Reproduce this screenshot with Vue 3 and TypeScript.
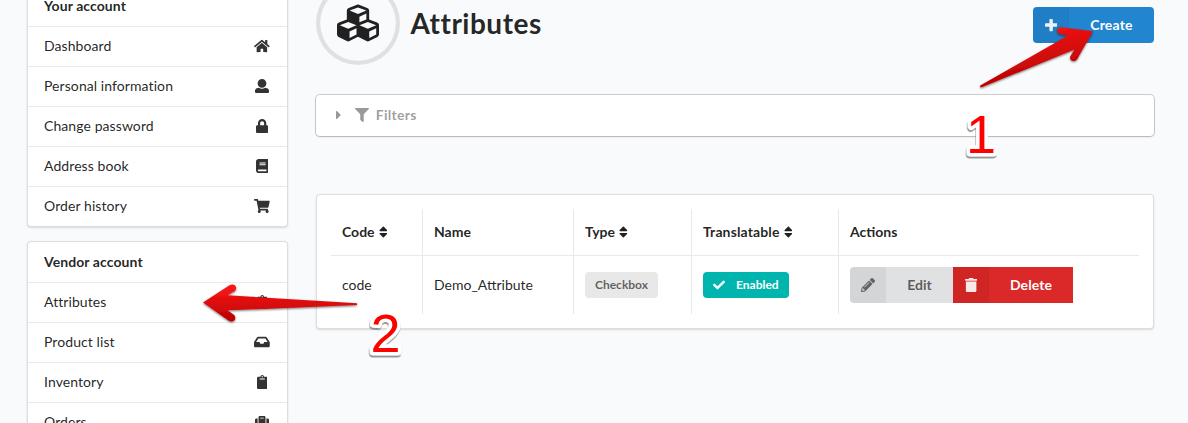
<script setup lang="ts">
interface Glyph { w: number; d: string }
interface MenuItem { label: string; icon: string }
interface Column { key: string; label: string; sortable: boolean }

const glyphs: Record<string, Glyph> = {
  home: { w: 576, d: 'M280.37 148.26L96 300.11V464a16 16 0 0 0 16 16l112.06-.29a16 16 0 0 0 15.92-16V368a16 16 0 0 1 16-16h64a16 16 0 0 1 16 16v95.64a16 16 0 0 0 16 16.05L464 480a16 16 0 0 0 16-16V300L295.67 148.26a12.19 12.19 0 0 0-15.3 0zM571.6 251.47L488 182.56V44.05a12 12 0 0 0-12-12h-56a12 12 0 0 0-12 12v72.61L318.47 43a48 48 0 0 0-61 0L4.34 251.47a12 12 0 0 0-1.6 16.9l25.5 31A12 12 0 0 0 45.15 301l235.22-193.74a12.19 12.19 0 0 1 15.3 0L530.9 301a12 12 0 0 0 16.9-1.6l25.5-31a12 12 0 0 0-1.7-16.93z' },
  user: { w: 512, d: 'M256 0c88.366 0 160 71.634 160 160s-71.634 160-160 160S96 248.366 96 160 167.634 0 256 0zm183.283 333.821l-71.313-17.828c-74.923 53.89-165.738 41.864-223.94 0l-71.313 17.828C29.981 344.505 0 382.903 0 426.955V464c0 26.51 21.49 48 48 48h416c26.51 0 48-21.49 48-48v-37.045c0-44.052-29.981-82.45-72.717-93.134z' },
  lock: { w: 448, d: 'M400 224h-24v-72C376 68.2 307.8 0 224 0S72 68.2 72 152v72H48c-26.5 0-48 21.5-48 48v192c0 26.5 21.5 48 48 48h352c26.5 0 48-21.5 48-48V272c0-26.5-21.5-48-48-48zm-104 0H152v-72c0-39.7 32.3-72 72-72s72 32.3 72 72v72z' },
  book: { w: 448, d: 'M448 360V24c0-13.3-10.7-24-24-24H96C43 0 0 43 0 96v320c0 53 43 96 96 96h328c13.3 0 24-10.7 24-24v-16c0-7.5-3.5-14.3-8.9-18.7-4.2-15.4-4.2-59.3 0-74.7 5.4-4.3 8.9-11.1 8.9-18.6zM128 134c0-3.3 2.7-6 6-6h212c3.3 0 6 2.7 6 6v20c0 3.3-2.7 6-6 6H134c-3.3 0-6-2.7-6-6v-20zm0 64c0-3.3 2.7-6 6-6h212c3.3 0 6 2.7 6 6v20c0 3.3-2.7 6-6 6H134c-3.3 0-6-2.7-6-6v-20zm253.4 250H96c-17.7 0-32-14.3-32-32 0-17.6 14.4-32 32-32h285.4c-1.9 17.1-1.9 46.9 0 64z' },
  cart: { w: 576, d: 'M528.12 301.319l47.273-208C578.806 78.301 567.391 64 551.99 64H159.208l-9.166-44.81C147.758 8.021 137.93 0 126.529 0H24C10.745 0 0 10.745 0 24v16c0 13.255 10.745 24 24 24h69.883l70.248 343.435C147.325 417.1 136 435.222 136 456c0 30.928 25.072 56 56 56s56-25.072 56-56c0-15.674-6.447-29.835-16.824-40h209.647C430.447 426.165 424 440.326 424 456c0 30.928 25.072 56 56 56s56-25.072 56-56c0-22.172-12.888-41.332-31.579-50.405l5.517-24.276c3.413-15.018-8.002-29.319-23.403-29.319H218.117l-6.545-32h293.145c11.206 0 20.92-7.754 23.403-18.681z' },
  clipboard: { w: 384, d: 'M384 112v352c0 26.51-21.49 48-48 48H48c-26.51 0-48-21.49-48-48V112c0-26.51 21.49-48 48-48h80c0-35.29 28.71-64 64-64s64 28.71 64 64h80c26.51 0 48 21.49 48 48zM192 40c-13.255 0-24 10.745-24 24s10.745 24 24 24 24-10.745 24-24-10.745-24-24-24m96 114v-20a6 6 0 0 0-6-6H102a6 6 0 0 0-6 6v20a6 6 0 0 0 6 6h180a6 6 0 0 0 6-6z' },
  inbox: { w: 576, d: 'M567.938 243.908L462.25 85.374A48.003 48.003 0 0 0 422.311 64H153.689a48 48 0 0 0-39.938 21.374L8.062 243.908A47.994 47.994 0 0 0 0 270.533V400c0 26.51 21.49 48 48 48h480c26.51 0 48-21.49 48-48V270.533a47.994 47.994 0 0 0-8.062-26.625zM162.252 128h251.497l85.333 128H376l-32 64H232l-32-64H76.918l85.334-128z' },
  suitcase: { w: 512, d: 'M128 480h256V80c0-26.5-21.5-48-48-48H176c-26.5 0-48 21.5-48 48v400zm64-384h128v32H192V96zm320 80v256c0 26.5-21.5 48-48 48h-48V128h48c26.5 0 48 21.5 48 48zM96 480H48c-26.5 0-48-21.5-48-48V176c0-26.5 21.5-48 48-48h48v352z' },
  cubes: { w: 512, d: 'M488.6 250.2L392 214V105.5c0-15-9.3-28.4-23.4-33.7l-100-37.5c-8.1-3.1-17.1-3.1-25.3 0l-100 37.5c-14.1 5.3-23.4 18.7-23.4 33.7V214l-96.6 36.2C9.3 255.5 0 268.9 0 283.9V394c0 13.6 7.7 26.1 19.9 32.2l100 50c10.1 5.1 22.1 5.1 32.2 0l103.9-52 103.9 52c10.1 5.1 22.1 5.1 32.2 0l100-50c12.2-6.1 19.9-18.6 19.9-32.2V283.9c0-15-9.3-28.4-23.4-33.7zM358 214.8l-85 31.9v-68.2l85-37v73.3zM154 104.1l102-38.2 102 38.2v.6l-102 41.4-102-41.4v-.6zm84 291.1l-85 42.5v-79.1l85-38.8v75.4zm0-112l-102 41.4-102-41.4v-.6l102-38.2 102 38.2v.6zm240 112l-85 42.5v-79.1l85-38.8v75.4zm0-112l-102 41.4-102-41.4v-.6l102-38.2 102 38.2v.6z' },
  filter: { w: 512, d: 'M487.976 0H24.028C2.71 0-8.047 25.866 7.058 40.971L192 225.941V432c0 7.831 3.821 15.17 10.237 19.662l80 55.98C298.02 518.69 320 507.493 320 487.98V225.941l184.947-184.97C520.021 25.896 509.338 0 487.976 0z' },
  caret: { w: 192, d: 'M0 384.662V127.338c0-17.818 21.543-26.741 34.142-14.142l128.662 128.662c7.81 7.81 7.81 20.474 0 28.284L34.142 398.804C21.543 411.404 0 402.48 0 384.662z' },
  plus: { w: 448, d: 'M448 294.2v-76.4c0-13.3-10.7-24-24-24H286.2V56c0-13.3-10.7-24-24-24h-76.4c-13.3 0-24 10.7-24 24v137.8H24c-13.3 0-24 10.7-24 24v76.4c0 13.3 10.7 24 24 24h137.8V456c0 13.3 10.7 24 24 24h76.4c13.3 0 24-10.7 24-24V318.2H424c13.3 0 24-10.7 24-24z' },
  check: { w: 512, d: 'M173.898 439.404l-166.4-166.4c-9.997-9.997-9.997-26.206 0-36.204l36.203-36.204c9.997-9.998 26.207-9.998 36.204 0L192 312.69 432.095 72.596c9.997-9.997 26.207-9.997 36.204 0l36.203 36.204c9.997 9.997 9.997 26.206 0 36.204l-294.4 294.401c-9.998 9.997-26.207 9.997-36.204-.001z' },
  pencil: { w: 512, d: 'M497.9 142.1l-46.1 46.1c-4.7 4.7-12.3 4.7-17 0l-111-111c-4.7-4.7-4.7-12.3 0-17l46.1-46.1c18.7-18.7 49.1-18.7 67.9 0l60.1 60.1c18.8 18.7 18.8 49.1 0 67.9zM284.2 99.8L21.6 362.4.4 483.9c-2.9 16.4 11.4 30.6 27.8 27.8l121.5-21.3 262.6-262.6c4.7-4.7 4.7-12.3 0-17l-111-111c-4.8-4.7-12.4-4.7-17.1 0zM124.1 339.9c-5.5-5.5-5.5-14.3 0-19.8l154-154c5.5-5.5 14.3-5.5 19.8 0s5.5 14.3 0 19.8l-154 154c-5.5 5.5-14.3 5.5-19.8 0zM88 424h48v36.3l-64.5 11.3-31.1-31.1L51.7 376H88v48z' },
  trash: { w: 448, d: 'M0 84V56c0-13.3 10.7-24 24-24h112l9.4-18.7c4-8.2 12.3-13.3 21.4-13.3h114.3c9.1 0 17.4 5.1 21.5 13.3L312 32h112c13.3 0 24 10.7 24 24v28c0 6.6-5.4 12-12 12H12C5.4 96 0 90.6 0 84zm416 56v324c0 26.5-21.5 48-48 48H80c-26.5 0-48-21.5-48-48V140c0-6.6 5.4-12 12-12h360c6.6 0 12 5.4 12 12z' },
  sort: { w: 320, d: 'M41 288h238c21.4 0 32.1 25.9 17 41L177 448c-9.4 9.4-24.6 9.4-33.9 0L24 329c-15.1-15.1-4.4-41 17-41zm255-105L177 64c-9.4-9.4-24.6-9.4-33.9 0L24 183c-15.1 15.1-4.4 41 17 41h238c21.4 0 32.1-25.9 17-41z' },
}

const box = (name: string): string => `0 0 ${glyphs[name].w} 512`

const menus: { title: string; items: MenuItem[] }[] = [
  {
    title: 'Your account',
    items: [
      { label: 'Dashboard', icon: 'home' },
      { label: 'Personal information', icon: 'user' },
      { label: 'Change password', icon: 'lock' },
      { label: 'Address book', icon: 'book' },
      { label: 'Order history', icon: 'cart' },
    ],
  },
  {
    title: 'Vendor account',
    items: [
      { label: 'Attributes', icon: 'clipboard' },
      { label: 'Product list', icon: 'inbox' },
      { label: 'Inventory', icon: 'clipboard' },
      { label: 'Orders', icon: 'suitcase' },
    ],
  },
]

const columns: Column[] = [
  { key: 'code', label: 'Code', sortable: true },
  { key: 'name', label: 'Name', sortable: false },
  { key: 'type', label: 'Type', sortable: true },
  { key: 'translatable', label: 'Translatable', sortable: true },
  { key: 'actions', label: 'Actions', sortable: false },
]
</script>

<template>
  <div class="page">
    <aside class="sidebar">
      <nav v-for="menu in menus" :key="menu.title" class="menu">
        <div class="item title">{{ menu.title }}</div>
        <a v-for="item in menu.items" :key="item.label" class="item">
          <span>{{ item.label }}</span>
          <span class="slot"><svg class="icon" :viewBox="box(item.icon)"><path :d="glyphs[item.icon].d" /></svg></span>
        </a>
      </nav>
    </aside>

    <main class="main">
      <header class="heading">
        <div class="circle"><svg class="icon" :viewBox="box('cubes')"><path :d="glyphs.cubes.d" /></svg></div>
        <h1>Attributes</h1>
        <button class="button primary">
          <span class="lead"><svg class="icon" :viewBox="box('plus')"><path :d="glyphs.plus.d" /></svg></span>
          <span class="text">Create</span>
        </button>
      </header>

      <section class="filters">
        <svg class="icon caret" :viewBox="box('caret')"><path :d="glyphs.caret.d" /></svg>
        <svg class="icon funnel" :viewBox="box('filter')"><path :d="glyphs.filter.d" /></svg>
        <span>Filters</span>
      </section>

      <section class="segment">
        <div class="grid">
          <div v-for="col in columns" :key="col.key" class="cell head">
            <span>{{ col.label }}</span>
            <svg v-if="col.sortable" class="icon sort" :viewBox="box('sort')"><path :d="glyphs.sort.d" /></svg>
          </div>
          <div class="cell">code</div>
          <div class="cell">Demo_Attribute</div>
          <div class="cell"><span class="label">Checkbox</span></div>
          <div class="cell">
            <span class="label teal">
              <svg class="icon" :viewBox="box('check')"><path :d="glyphs.check.d" /></svg>Enabled
            </span>
          </div>
          <div class="cell">
            <button class="button edit">
              <span class="lead"><svg class="icon" :viewBox="box('pencil')"><path :d="glyphs.pencil.d" /></svg></span>
              <span class="text">Edit</span>
            </button>
            <button class="button delete">
              <span class="lead"><svg class="icon" :viewBox="box('trash')"><path :d="glyphs.trash.d" /></svg></span>
              <span class="text">Delete</span>
            </button>
          </div>
        </div>
      </section>
    </main>

    <svg class="notes" viewBox="0 0 1188 423">
      <defs>
        <linearGradient id="redDown" x1="0" y1="0" x2="0" y2="1">
          <stop offset="0" stop-color="#ff1a1a" />
          <stop offset="1" stop-color="#b80000" />
        </linearGradient>
        <linearGradient id="redDiagonal" x1="0.55" y1="0" x2="0.85" y2="0.8">
          <stop offset="0" stop-color="#f81414" />
          <stop offset="1" stop-color="#b00000" />
        </linearGradient>
        <filter id="soft" x="-10%" y="-20%" width="120%" height="150%">
          <feDropShadow dx="0" dy="1" stdDeviation="1" flood-color="#000" flood-opacity="0.55" />
        </filter>
        <filter id="edge" x="-30%" y="-20%" width="160%" height="150%">
          <feDropShadow dx="-0.5" dy="1.8" stdDeviation="0.3" flood-color="#8c8c8c" flood-opacity="1" />
        </filter>
      </defs>
      <path class="arrow" fill="url(#redDown)" d="M203 302.5L229.500 285.200C234.500 282.500 238.500 287.500 234.500 291.200L227.500 295.300L357 303.200V305L227.500 310.300L233.500 314.500C238 318.500 233 324 228.500 320.500Z" />
      <path class="arrow" fill="url(#redDiagonal)" d="M1093 31.300L1061 27.200C1056 27 1056 33.700 1060.500 34.300L1068 35.500L980.300 85.500Q979.500 87.500 981.500 87.300L1074.500 49.500L1070.500 56C1068.500 60.500 1074.500 63 1077 59.300Z" />
      <g class="digits">
        <text x="966" y="153">1</text>
        <text x="370.500" y="352">2</text>
      </g>
    </svg>
  </div>
</template>

<style>
body {
  margin: 0;
  background: #f9fafc;
}
</style>

<style scoped>
.page {
  position: relative;
  display: flex;
  gap: 28px;
  box-sizing: border-box;
  width: 1188px;
  height: 423px;
  padding: 0 34px 0 27px;
  overflow: hidden;
  font: 14px/20px Lato, "Liberation Sans", sans-serif;
  color: rgba(0, 0, 0, 0.87);
}
.icon {
  display: block;
  height: 1em;
  width: auto;
  fill: currentColor;
}
.sidebar {
  flex: none;
  width: 261px;
  margin-top: -15px;
}
.menu {
  box-sizing: border-box;
  margin-bottom: 14px;
  background: #fff;
  border: 1px solid rgba(34, 36, 38, 0.15);
  border-radius: 4px;
  box-shadow: 0 1px 2px rgba(34, 36, 38, 0.15);
}
.item {
  display: flex;
  align-items: center;
  justify-content: space-between;
  box-sizing: border-box;
  height: 40px;
  padding: 0 16.500px 2px 16px;
  border-top: 1px solid rgba(34, 36, 38, 0.1);
  letter-spacing: 0.08px;
}
.title {
  border-top-color: transparent;
  font-weight: 700;
}
.slot {
  display: flex;
  justify-content: center;
  width: 17px;
  color: rgba(0, 0, 0, 0.8);
}
.main {
  flex: 1;
  min-width: 0;
}
.heading {
  display: flex;
  align-items: center;
  height: 84px;
  margin-top: -19px;
}
.circle {
  display: flex;
  align-items: center;
  justify-content: center;
  width: 84px;
  height: 84px;
  border-radius: 50%;
  box-shadow: 0 0 0 4.2px rgba(0, 0, 0, 0.1) inset;
  font-size: 42px;
}
h1 {
  flex: 1;
  margin: 0 0 0 10.500px;
  font-size: 28px;
  line-height: 36px;
  font-weight: 700;
  letter-spacing: 0.5px;
}
.button {
  display: flex;
  height: 36px;
  padding: 0;
  border: 0;
  overflow: hidden;
  font: 700 14px/36px Lato, "Liberation Sans", sans-serif;
  color: #fff;
}
.lead {
  display: flex;
  align-items: center;
  justify-content: center;
  width: 36px;
  height: 36px;
  background: rgba(0, 0, 0, 0.05);
}
.lead .icon {
  opacity: 0.9;
}
.text {
  flex: 1;
  text-align: center;
}
.primary {
  width: 121px;
  margin-top: 4px;
  border-radius: 4px;
  background: #2185d0;
  letter-spacing: 0.2px;
}
.edit {
  width: 103px;
  border-radius: 4px 0 0 4px;
  background: #e0e1e2;
  color: rgba(0, 0, 0, 0.6);
}
.delete {
  width: 120px;
  background: #db2828;
  letter-spacing: 0.1px;
}
.filters {
  display: flex;
  align-items: center;
  box-sizing: border-box;
  height: 41px;
  margin-top: 30px;
  padding-bottom: 2px;
  border-radius: 4px;
  background: #fff;
  box-shadow: 0 1px 2px rgba(34, 36, 38, 0.15), 0 0 0 1px rgba(34, 36, 38, 0.2);
  color: rgba(0, 0, 0, 0.4);
  font-weight: 700;
  letter-spacing: 0.3px;
}
.caret {
  margin-left: 20px;
}
.funnel {
  margin: 0 7px 0 13.500px;
}
.segment {
  box-sizing: border-box;
  height: 135px;
  margin-top: 58px;
  padding: 14px;
  border: 1px solid rgba(34, 36, 38, 0.15);
  border-radius: 4px;
  background: #fff;
  box-shadow: 0 1px 2px rgba(34, 36, 38, 0.15);
}
.grid {
  display: grid;
  grid-template-columns: 91px 151px 118px 147px 1fr;
  grid-template-rows: 47px 58px;
}
.cell {
  display: flex;
  align-items: center;
  padding-left: 11px;
  border-left: 1px solid rgba(34, 36, 38, 0.1);
}
.cell:nth-child(5n + 1) {
  border-left: 0;
}
.head {
  border-bottom: 1px solid rgba(34, 36, 38, 0.1);
  font-weight: 700;
}
.head:nth-child(4) {
  letter-spacing: 0.13px;
}
.sort {
  margin: -1px 0 0 4px;
}
.label {
  display: flex;
  align-items: center;
  height: 26px;
  padding: 0 10px;
  border-radius: 4px;
  background: #e8e8e8;
  color: rgba(0, 0, 0, 0.6);
  font-size: 12px;
  font-weight: 700;
}
.teal {
  background: #00b5ad;
  color: #fff;
}
.teal .icon {
  margin: 0 11.500px 0 -0.500px;
}
.notes {
  position: absolute;
  left: 0;
  top: 0;
  width: 1188px;
  height: 423px;
  pointer-events: none;
}
.arrow {
  filter: url(#soft);
}
.digits {
  filter: url(#edge);
}
.digits text {
  font: 54px "Liberation Sans", Arial, sans-serif;
  fill: #f00;
  stroke: #fff;
  stroke-width: 7px;
  stroke-linejoin: round;
  paint-order: stroke;
}
</style>
